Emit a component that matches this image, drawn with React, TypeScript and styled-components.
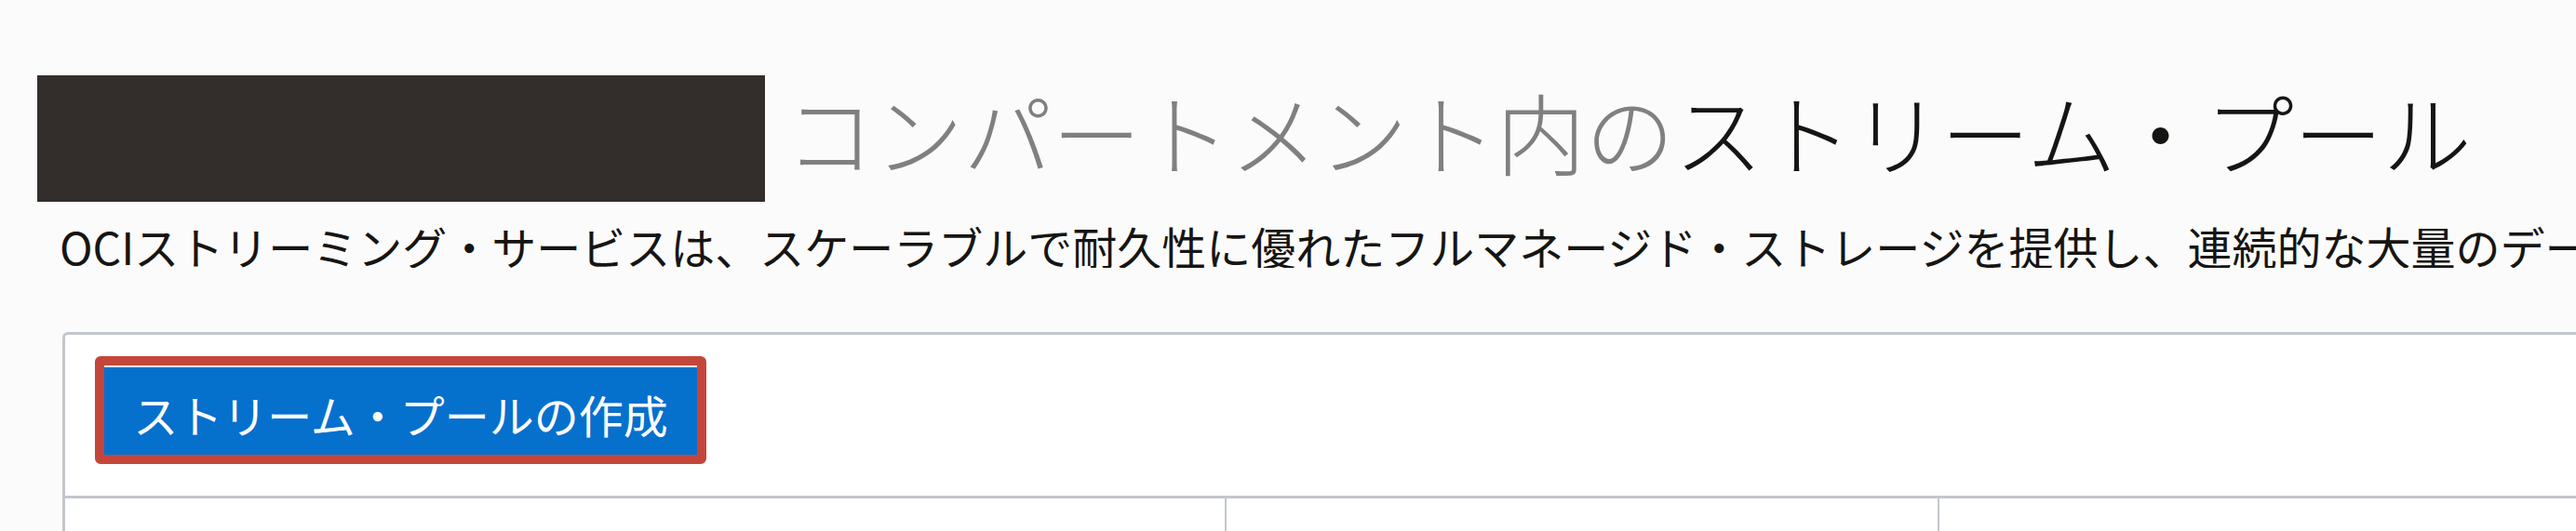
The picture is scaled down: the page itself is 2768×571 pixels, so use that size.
import React from 'react';
import styled, { createGlobalStyle } from 'styled-components';

const GlobalStyle = createGlobalStyle`
  html, body {
    margin: 0;
    padding: 0;
    background: #fbfbfb;
    overflow: hidden;
  }
  body {
    font-family: "Noto Sans CJK JP", "Noto Sans", sans-serif;
    color: #161513;
  }
`;

const Page = styled.div`
  padding: 81px 0 0 40px;
  width: 2728px;
  height: 490px;
  overflow: hidden;
  white-space: nowrap;
`;

const HeaderRow = styled.div`
  display: flex;
  align-items: flex-start;
  height: 136px;
`;

const Redacted = styled.div`
  flex-shrink: 0;
  width: 782px;
  height: 136px;
  background: #332e2b;
`;

const Title = styled.h1`
  margin: 12px 0 0 22px;
  font-size: 95.5px;
  font-weight: 300;
  line-height: 1;
`;

const TitleMuted = styled.span`
  color: #808080;
`;

const Content = styled.div`
  padding-left: 24px;
`;

const Description = styled.p`
  margin: 23px 0 0;
  font-size: 48px;
  line-height: 1;
  color: #161513;
  overflow: hidden;
`;

const Panel = styled.section`
  margin: 69px -40px 0 3px;
  background: #fff;
  border: 3px solid #c3c6cc;
  border-right: 0;
  border-bottom: 0;
  border-top-left-radius: 6px;
  height: 260px;
`;

const Toolbar = styled.div`
  display: flex;
  padding: 23px 0 34px 32px;
  border-bottom: 3px solid #c3c6cc;
`;

const Highlight = styled.div`
  display: flex;
  border: 10px solid #c4463a;
  border-radius: 6px;
`;

const PrimaryButton = styled.button`
  display: flex;
  align-items: center;
  justify-content: center;
  box-sizing: border-box;
  width: 637px;
  height: 96px;
  margin: 0;
  padding: 6px 0 0;
  border: 0;
  border-top: 2px solid #eef5fc;
  background: #0670cd;
  color: #fff;
  font-family: inherit;
  font-size: 48px;
  line-height: 1;
  cursor: pointer;
`;

const HeaderCells = styled.div`
  display: flex;
  height: 40px;
`;

const HeaderCell = styled.div<{ width?: number }>`
  flex: ${p => (p.width ? `0 0 ${p.width}px` : '1')};
  border-right: 2px solid #c3c6cc;
`;

export default function App() {
  return (
    <>
      <GlobalStyle />
      <Page>
        <HeaderRow>
          <Redacted />
          <Title>
            <TitleMuted>コンパートメント内の</TitleMuted>ストリーム・プール
          </Title>
        </HeaderRow>
        <Content>
          <Description>
            OCIストリーミング・サービスは、スケーラブルで耐久性に優れたフルマネージド・ストレージを提供し、連続的な大量のデータ・ストリームを取り込むためのソリューションです。
          </Description>
          <Panel>
            <Toolbar>
              <Highlight>
                <PrimaryButton type="button">ストリーム・プールの作成</PrimaryButton>
              </Highlight>
            </Toolbar>
            <HeaderCells>
              <HeaderCell width={1246} />
              <HeaderCell width={764} />
              <HeaderCell />
            </HeaderCells>
          </Panel>
        </Content>
      </Page>
    </>
  );
}
